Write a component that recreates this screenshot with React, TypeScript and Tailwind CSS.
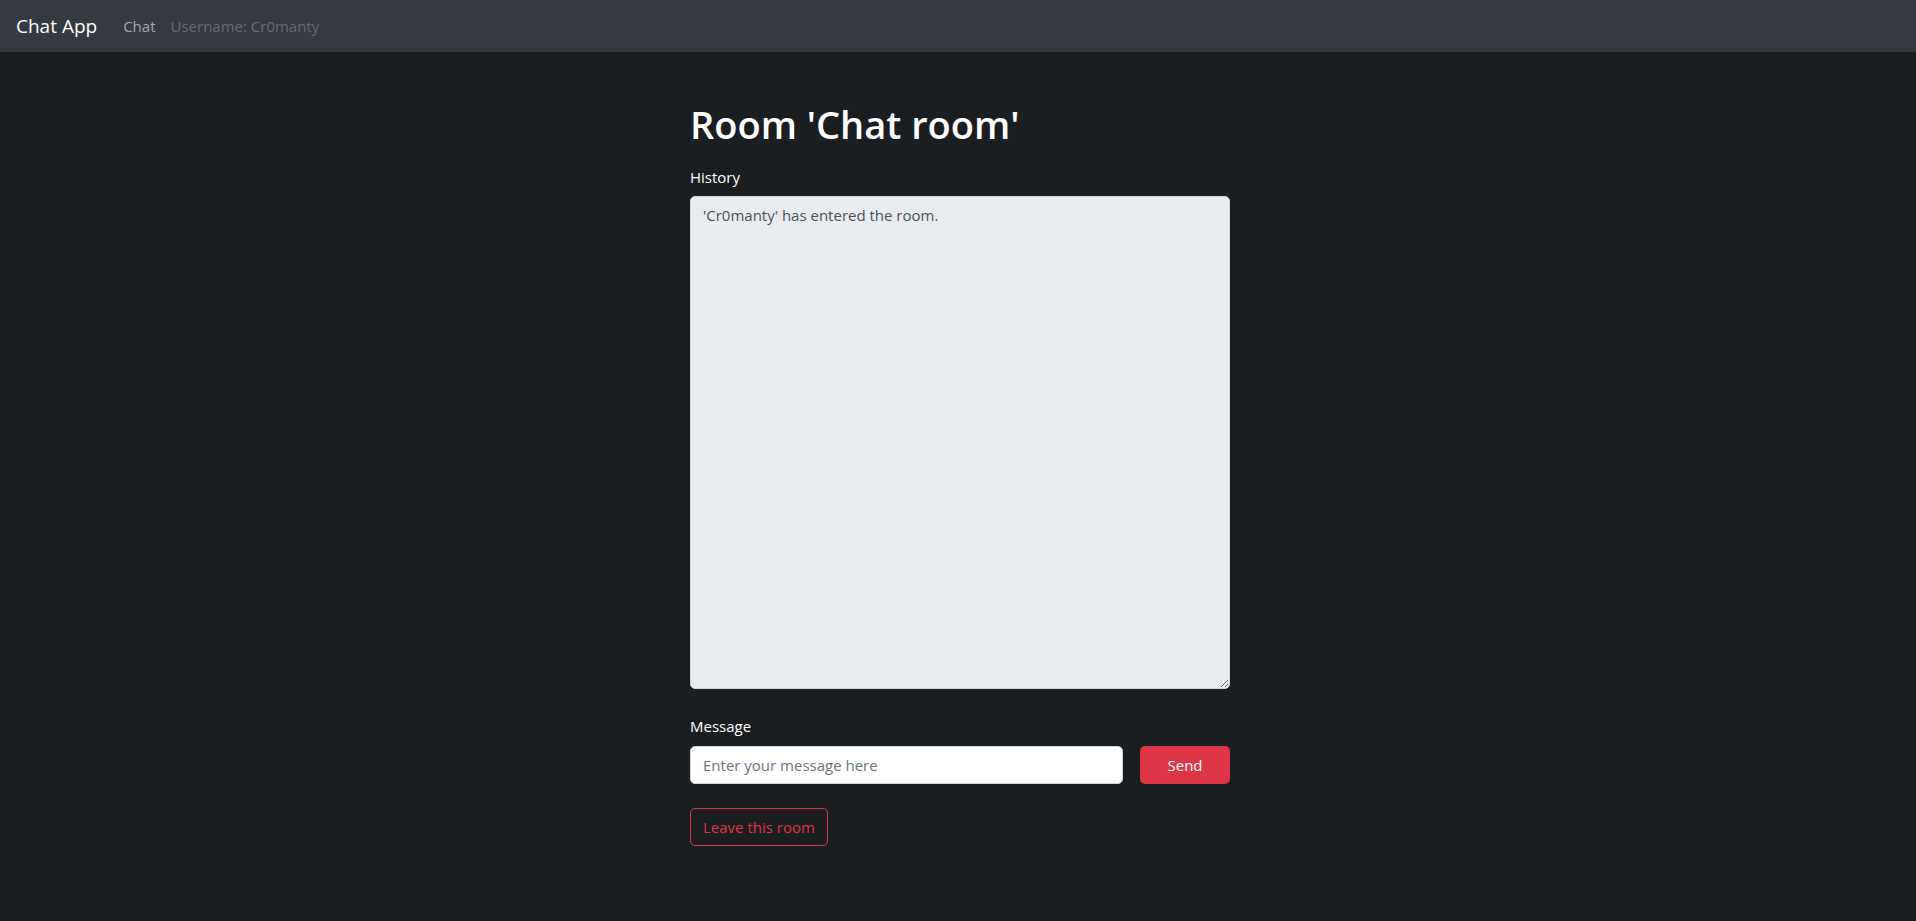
export default function App() {
  return (
    <div className="min-h-screen bg-[#1b1e21] font-['Open_Sans',sans-serif] text-white">
      {/* Navbar */}
      <nav className="h-[52px] bg-[#343a40] flex items-center px-4">
        <span className="text-[19px] leading-[30px] text-white mr-[26px]">Chat App</span>
        <span className="text-[15px] text-[#a4a7aa] mr-[15px]">Chat</span>
        <span className="text-[15px] text-[#676b6f]">Username: Cr0manty</span>
      </nav>

      {/* Room */}
      <div className="flex justify-center pl-1">
        <main className="w-[540px] pt-12">
          <h1 className="text-[38px] leading-[48px] font-semibold mb-[17px]">Room 'Chat room'</h1>

          <label className="block text-[15px] leading-6 mb-[7px]">History</label>
          <textarea
            readOnly
            value="'Cr0manty' has entered the room."
            className="block w-full h-[493px] bg-[#e9ecef] border border-[#ced4da] rounded-[5px] px-3 py-1.5 text-[15px] leading-6 text-[#495057] outline-none"
          />

          <label className="block text-[15px] leading-6 mt-[25px] mb-2">Message</label>
          <div className="flex gap-[17px]">
            <input
              type="text"
              placeholder="Enter your message here"
              className="flex-1 h-[38px] bg-white border border-[#ced4da] rounded-[5px] px-3 text-[15px] text-[#212529] placeholder:text-[#6c757d] outline-none"
            />
            <button className="w-[90px] h-[38px] bg-[#dc3545] rounded-[5px] text-[15px] text-white">Send</button>
          </div>

          <button className="mt-6 h-[38px] px-3 border border-[#dc3545] rounded-[5px] text-[15px] text-[#dc3545]">
            Leave this room
          </button>
        </main>
      </div>
    </div>
  );
}
